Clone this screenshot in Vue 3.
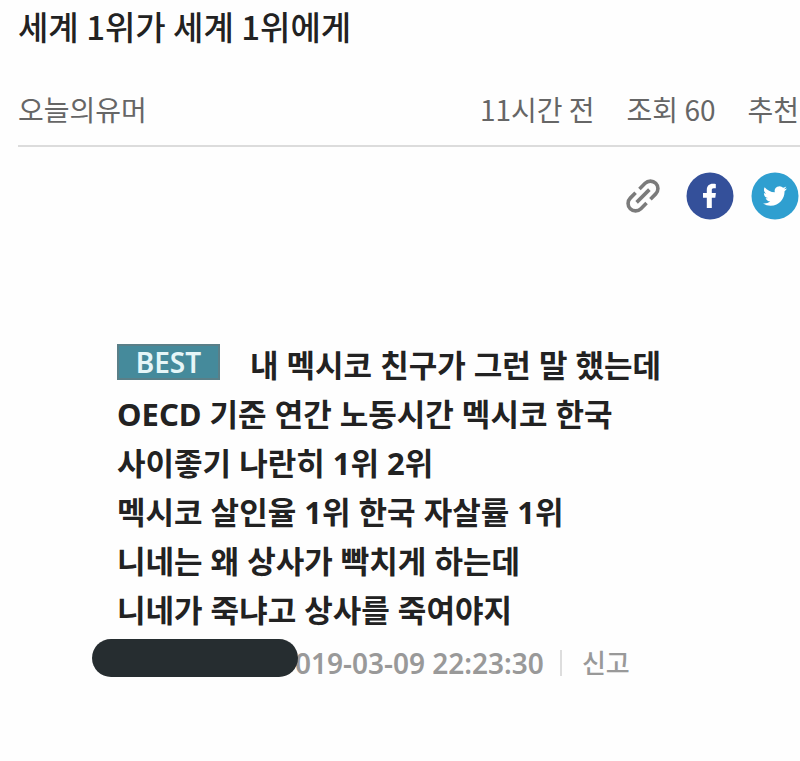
<script setup>
const title = '세계 1위가 세계 1위에게'
const stats = ['11시간 전', '조회 60', '추천']
const lines = [
  '내 멕시코 친구가 그런 말 했는데',
  'OECD 기준 연간 노동시간 멕시코 한국',
  '사이좋기 나란히 1위 2위',
  '멕시코 살인율 1위 한국 자살률 1위',
  '니네는 왜 상사가 빡치게 하는데',
  '니네가 죽냐고 상사를 죽여야지',
]
</script>

<template>
  <article class="post">
    <header class="head">
      <h1 class="title">{{ title }}</h1>
      <div class="meta">
        <span class="board">오늘의유머</span>
        <span v-for="s in stats" :key="s" class="stat">{{ s }}</span>
      </div>
    </header>

    <div class="share">
      <button type="button" class="icon link" aria-label="링크 복사">
        <svg viewBox="0 0 36 36" width="36" height="36" fill="none" stroke="#7b7b7b" stroke-width="3.6">
          <g transform="rotate(-45 18 18)">
            <path d="M15 10.500H7.500a7.500 7.500 0 0 0 0 15H15.500" />
            <path d="M20.500 10.500h8a7.500 7.500 0 0 1 0 15H21" />
            <path d="M9 18h18" />
          </g>
        </svg>
      </button>
      <button type="button" class="icon" aria-label="페이스북 공유">
        <svg viewBox="0 0 48 48" width="48" height="48">
          <circle cx="24" cy="24" r="23.500" fill="#34509a" />
          <path fill="#fff" d="M20.800 36V25.800H17v-4.700h3.800v-3.200c0-4 2.400-6.200 6-6.200 1.400 0 2.600.1 3 .2v4.400h-2.100c-1.500 0-1.900.7-1.900 1.900v2.900h4.100l-.6 4.700h-3.500V36z" />
        </svg>
      </button>
      <button type="button" class="icon" aria-label="트위터 공유">
        <svg viewBox="0 0 48 48" width="48" height="48">
          <circle cx="24" cy="24" r="23.500" fill="#2f9fd0" />
          <g transform="translate(12 12)">
            <path fill="#fff" d="M23.950 4.570a10 10 0 0 1-2.820.770 4.960 4.960 0 0 0 2.160-2.720c-.950.550-2 .950-3.130 1.180a4.920 4.920 0 0 0-8.380 4.480C7.690 8.090 4.070 6.130 1.640 3.160a4.820 4.820 0 0 0-.670 2.480c0 1.710.870 3.210 2.190 4.100a4.900 4.900 0 0 1-2.230-.620v.060a4.920 4.920 0 0 0 3.950 4.830 5 5 0 0 1-2.210.080 4.940 4.940 0 0 0 4.600 3.420A9.870 9.870 0 0 1 0 19.540a14 14 0 0 0 7.550 2.210c9.050 0 14-7.500 14-13.980 0-.210 0-.420-.020-.630a9.940 9.940 0 0 0 2.460-2.550z" />
          </g>
        </svg>
      </button>
    </div>

    <section class="comment">
      <p v-for="(line, i) in lines" :key="i" class="line">
        <span v-if="i === 0" class="best">BEST</span>{{ line }}
      </p>
      <footer class="foot">
        <span class="mask"></span>
        <span class="date">019-03-09 22:23:30</span>
        <span class="bar"></span>
        <a class="report" href="#">신고</a>
      </footer>
    </section>
  </article>
</template>

<style>
body {
  margin: 0;
  background: #fefefe;
}
</style>

<style scoped>
.post {
  padding-top: 1px;
  font-family: "Noto Sans CJK KR", sans-serif;
  color: #222;
  overflow: hidden;
}
.head {
  margin-left: 18px;
  border-bottom: 2px solid #dcdcdc;
}
.title {
  margin: 0;
  font-size: 33px;
  line-height: 50px;
  font-weight: 500;
}
.meta {
  display: flex;
  gap: 32px;
  padding: 37px 1px 15px 0;
  font-size: 28px;
  line-height: 42px;
  color: #666;
  white-space: nowrap;
}
.board {
  flex: 1;
}
.share {
  display: flex;
  justify-content: flex-end;
  align-items: center;
  gap: 17px;
  padding: 25px 1px 0 0;
}
.icon {
  display: flex;
  padding: 0;
  border: 0;
  background: none;
  cursor: pointer;
}
.link {
  margin-right: 8px;
}
.comment {
  padding: 121px 40px 68px 117px;
  font-family: "Noto Sans", "Noto Sans CJK KR", sans-serif;
}
.line {
  margin: 0;
  font-size: 31px;
  line-height: 49px;
  font-weight: 700;
}
.best {
  display: inline-block;
  box-sizing: border-box;
  width: 103px;
  margin-right: 30px;
  border: 2px solid #5a7f88;
  background: #458a9b;
  color: #e6f6f8;
  font-size: 28px;
  line-height: 32px;
  font-weight: 600;
  text-align: center;
  vertical-align: 4px;
}
.foot {
  display: flex;
  align-items: center;
  margin: 4px 0 0 -25px;
  font-size: 26px;
  line-height: 48px;
  font-weight: 600;
  color: #999;
  white-space: nowrap;
}
.mask {
  align-self: flex-start;
  width: 206px;
  height: 38px;
  margin-right: -3px;
  border-radius: 19px;
  background: #262d30;
  z-index: 1;
}
.date {
  font-size: 28px;
}
.bar {
  width: 2px;
  height: 26px;
  margin: 0 20px 0 16px;
  background: #ddd;
}
.report {
  color: inherit;
  font-weight: 500;
  text-decoration: none;
}
</style>
